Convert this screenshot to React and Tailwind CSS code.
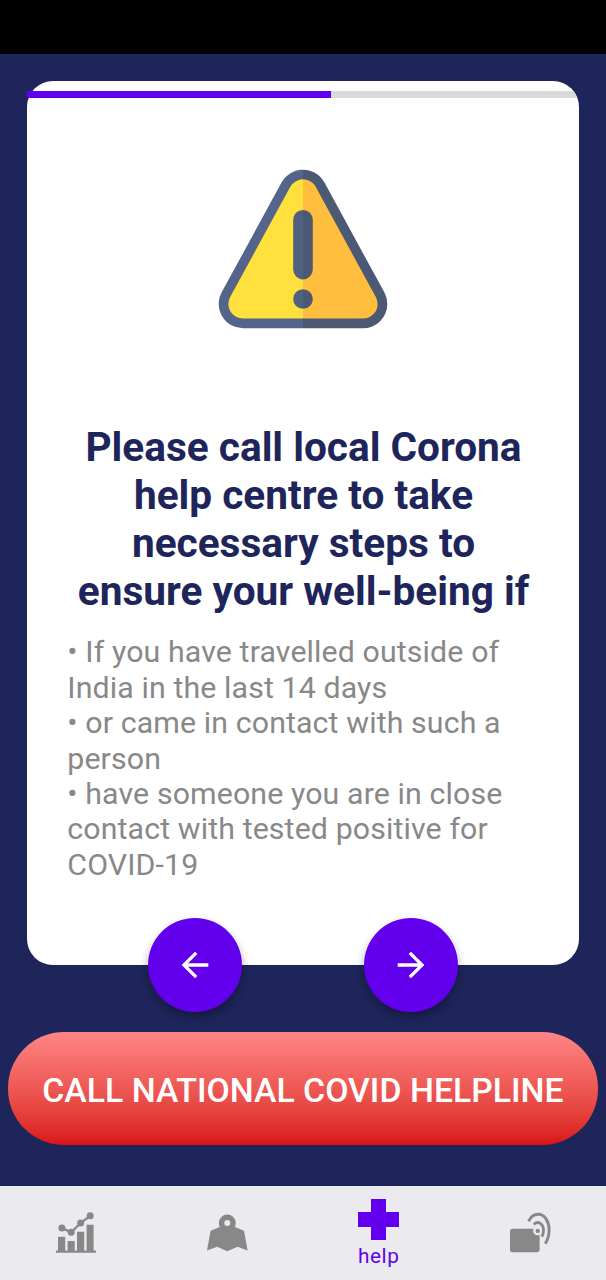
const HEADING = [
  "Please call local Corona",
  "help centre to take",
  "necessary steps to",
  "ensure your well-being if",
];

const ADVICE = [
  ["• If you have travelled outside of", "India in the last 14 days"],
  ["• or came in contact with such a", "person"],
  ["• have someone you are in close", "contact with tested positive for", "COVID-19"],
];

function WarningIcon() {
  const d = "M93 34L33 144H153Z";
  return (
    <svg className="h-[180px] w-[186px]" viewBox="0 0 186 180" fill="none">
      <defs>
        <clipPath id="left"><rect x="0" y="0" width="93" height="180" /></clipPath>
        <clipPath id="right"><rect x="93" y="0" width="93" height="180" /></clipPath>
      </defs>
      <g clipPath="url(#left)">
        <path d={d} stroke="#55648a" strokeWidth="48.6" strokeLinejoin="round" />
        <path d={d} fill="#ffe03c" stroke="#ffe03c" strokeWidth="29.2" strokeLinejoin="round" />
        <rect x="83.2" y="50" width="19.6" height="69.4" rx="9.8" fill="#50607f" />
        <circle cx="93" cy="139" r="9.8" fill="#50607f" />
      </g>
      <g clipPath="url(#right)">
        <path d={d} stroke="#4b5975" strokeWidth="48.6" strokeLinejoin="round" />
        <path d={d} fill="#ffbe3d" stroke="#ffbe3d" strokeWidth="29.2" strokeLinejoin="round" />
        <rect x="83.2" y="50" width="19.6" height="69.4" rx="9.8" fill="#4b5975" />
        <circle cx="93" cy="139" r="9.8" fill="#4b5975" />
      </g>
    </svg>
  );
}

function RoundButton({ label, d }) {
  return (
    <button
      aria-label={label}
      className="flex size-[94px] items-center justify-center rounded-full bg-[#6200ee] shadow-[0_5px_10px_rgba(0,0,0,0.32)]"
    >
      <svg className="size-[40px]" viewBox="0 0 24 24" fill="#fff"><path d={d} /></svg>
    </button>
  );
}

function ChartIcon() {
  return (
    <svg className="size-[42px]" viewBox="0 0 42 42" fill="#888">
      <path d="M1 38.6h40v2.2H1zM3 24.8h7.2V39H3zM12.6 29h7.1V39h-7.1zM22 19.8h7.2V39H22zM31.6 12.8h7V39h-7z" />
      <path d="M6.9 16L16.2 20.3L25.6 11L35.2 3.8" fill="none" stroke="#888" strokeWidth="2.3" />
      <circle cx="6.9" cy="16" r="3.5" /><circle cx="16.2" cy="20.3" r="3.5" />
      <circle cx="25.6" cy="11" r="3.5" /><circle cx="35.2" cy="3.8" r="3.5" />
    </svg>
  );
}

function MapIcon() {
  return (
    <svg className="size-[42px]" viewBox="0 0 42 42" fill="#888">
      <path fillRule="evenodd" d="M21.3 2.6a8.4 8.4 0 0 1 8.4 8.4c0 1.5-.3 2.7-.8 4L38 18.8l3.6 19.8L31.5 34.8L21.3 39.2L11.2 34.8L1 38.6l3.6-19.8l9.1-3.8c-.5-1.3-.8-2.5-.8-4a8.4 8.4 0 0 1 8.4-8.4zM21.3 8a3 3 0 1 0 0 6a3 3 0 0 0 0-6z" />
    </svg>
  );
}

function CastIcon() {
  return (
    <svg className="size-[42px]" viewBox="0 0 42 42" fill="none">
      <rect x="1" y="16.8" width="29.6" height="23.4" rx="2.6" fill="#888" />
      <circle cx="28.7" cy="18.7" r="4.6" fill="#eaeaef" />
      <circle cx="28.7" cy="18.9" r="2.2" fill="#888" />
      <path d="M24.8 12.4C29.2 8.2 34.5 12 34.5 18.5C34.5 20.7 34 22.7 32.9 24.6" stroke="#888" strokeWidth="2.8" />
      <path d="M19.6 9.4C21.7 4.7 25.2 2.3 29.2 2.3C36 2.3 40.1 10 40.1 18C40.1 23.5 38.6 28 36.3 31.8" stroke="#888" strokeWidth="2.9" />
    </svg>
  );
}

export default function App() {
  return (
    <div className="flex h-[1280px] w-[606px] flex-col overflow-hidden bg-[#1e255b] font-['Roboto',sans-serif]">
      <div className="h-[54px] shrink-0 bg-black" />
      <main className="flex h-[1132px] shrink-0 flex-col pt-[27px]">
        <section className="mx-[27px] flex h-[884px] shrink-0 flex-col rounded-[26px] bg-white pt-[10px]">
          <div className="h-[7px] shrink-0 [clip-path:inset(0_0_0_0)]">
            <div className="-mt-[10px] h-[60px] overflow-hidden rounded-tr-[26px] pt-[10px]">
              <div className="h-[7px] bg-[#dadada]">
                <div className="h-full w-[55%] bg-[#6200ee]" />
              </div>
            </div>
          </div>
          <div className="mt-[62px] flex shrink-0 justify-center"><WarningIcon /></div>
          <h1 className="mt-[83px] ml-[1px] shrink-0 text-center text-[40.6px] leading-[48.1px] font-bold whitespace-nowrap text-[#1e255b]">
            {HEADING.map((line) => <span key={line} className="block">{line}</span>)}
          </h1>
          <ul className="mt-[19px] ml-[40.3px] text-[30.3px] leading-[35.4px] tracking-[0.12px] whitespace-nowrap text-[#888]">
            {ADVICE.map((lines) => (
              <li key={lines[0]}>
                {lines.map((line) => <span key={line} className="block">{line}</span>)}
              </li>
            ))}
          </ul>
        </section>
        <div className="relative -mt-[47px] flex shrink-0 justify-center gap-[121.5px]">
          <RoundButton label="Back" d="M20 11H7.83l5.59-5.59L12 4l-8 8 8 8 1.41-1.41L7.83 13H20v-2z" />
          <RoundButton label="Next" d="M12 4l-1.41 1.41L16.17 11H4v2h12.17l-5.58 5.59L12 20l8-8z" />
        </div>
        <button className="mx-[8px] mt-[20px] flex h-[113px] shrink-0 items-center justify-center rounded-[56px] bg-linear-to-b from-[#ff8585] to-[#da1117] pt-[5px] text-[33.8px] font-medium whitespace-nowrap text-white">
          CALL NATIONAL COVID HELPLINE
        </button>
      </main>
      <nav className="grid h-[94px] shrink-0 grid-cols-4 bg-[#eaeaef]">
        <div className="flex justify-center pt-[26px]"><ChartIcon /></div>
        <div className="flex justify-center pt-[26px]"><MapIcon /></div>
        <div className="flex flex-col items-center pt-[13px] text-[#6200ee]">
          <svg className="size-[41px]" viewBox="0 0 41 41" fill="#6200ee">
            <path d="M13 0h15v13h13v15H28v13H13V28H0V13h13z" />
          </svg>
          <span className="mt-[4px] text-[20.8px] leading-[24px] tracking-[0.6px]">help</span>
        </div>
        <div className="flex justify-center pt-[26px]"><CastIcon /></div>
      </nav>
    </div>
  );
}
